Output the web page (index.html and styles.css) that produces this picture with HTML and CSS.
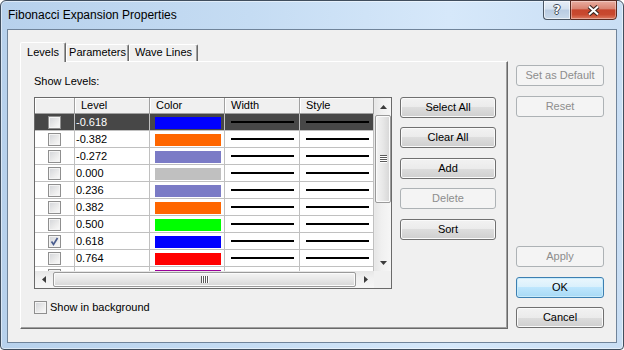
FILE: index.html
```html
<!DOCTYPE html>
<html>
<head>
<meta charset="utf-8">
<title>Fibonacci Expansion Properties</title>
<link rel="stylesheet" href="styles.css">
</head>
<body>
<div class="window">
  <div class="titlebar">
    <div class="title">Fibonacci Expansion Properties</div>
    <div class="caption">
      <div class="cap-btn help"><span class="help-glyph">?</span></div>
      <div class="cap-btn close">
        <svg width="13" height="11" viewBox="0 0 13 11"><path d="M2 1.5 L11 9.5 M11 1.5 L2 9.5" stroke="#3a2622" stroke-width="4.2" fill="none"/><path d="M2 1.5 L11 9.5 M11 1.5 L2 9.5" stroke="#ffffff" stroke-width="2" fill="none"/></svg>
      </div>
    </div>
  </div>
  <div class="client">
    <div class="tabs-area">
      <div class="tabstrip">
        <div class="tab tab-levels active">Levels</div>
        <div class="tab tab-params">Parameters</div>
        <div class="tab tab-wave">Wave Lines</div>
      </div>
      <div class="panel">
        <div class="show-label">Show Levels:</div>
        <div class="panel-body">
          <div class="grid">
            <div class="grid-top">
              <div class="table">
                <div class="row head">
                  <div class="cell c0"></div>
                  <div class="cell c1">Level</div>
                  <div class="cell c2">Color</div>
                  <div class="cell c3">Width</div>
                  <div class="cell c4">Style</div>
                </div>
                <div class="row sel">
                  <div class="cell c0"><span class="cb"></span></div>
                  <div class="cell c1">-0.618</div>
                  <div class="cell c2"><span class="swatch" style="background:#0000ff"></span></div>
                  <div class="cell c3"><span class="line"></span></div>
                  <div class="cell c4"><span class="line"></span></div>
                </div>
                <div class="row">
                  <div class="cell c0"><span class="cb"></span></div>
                  <div class="cell c1">-0.382</div>
                  <div class="cell c2"><span class="swatch" style="background:#ff6600"></span></div>
                  <div class="cell c3"><span class="line"></span></div>
                  <div class="cell c4"><span class="line"></span></div>
                </div>
                <div class="row">
                  <div class="cell c0"><span class="cb"></span></div>
                  <div class="cell c1">-0.272</div>
                  <div class="cell c2"><span class="swatch" style="background:#7b7bc6"></span></div>
                  <div class="cell c3"><span class="line"></span></div>
                  <div class="cell c4"><span class="line"></span></div>
                </div>
                <div class="row">
                  <div class="cell c0"><span class="cb"></span></div>
                  <div class="cell c1">0.000</div>
                  <div class="cell c2"><span class="swatch" style="background:#c0c0c0"></span></div>
                  <div class="cell c3"><span class="line"></span></div>
                  <div class="cell c4"><span class="line"></span></div>
                </div>
                <div class="row">
                  <div class="cell c0"><span class="cb"></span></div>
                  <div class="cell c1">0.236</div>
                  <div class="cell c2"><span class="swatch" style="background:#7b7bc6"></span></div>
                  <div class="cell c3"><span class="line"></span></div>
                  <div class="cell c4"><span class="line"></span></div>
                </div>
                <div class="row">
                  <div class="cell c0"><span class="cb"></span></div>
                  <div class="cell c1">0.382</div>
                  <div class="cell c2"><span class="swatch" style="background:#ff6600"></span></div>
                  <div class="cell c3"><span class="line"></span></div>
                  <div class="cell c4"><span class="line"></span></div>
                </div>
                <div class="row">
                  <div class="cell c0"><span class="cb"></span></div>
                  <div class="cell c1">0.500</div>
                  <div class="cell c2"><span class="swatch" style="background:#00ff00"></span></div>
                  <div class="cell c3"><span class="line"></span></div>
                  <div class="cell c4"><span class="line"></span></div>
                </div>
                <div class="row">
                  <div class="cell c0"><span class="cb checked"><svg width="11" height="11" viewBox="0 0 11 11"><path d="M2.5 5.5 L4.5 8.5 L8.5 2" stroke="#4a5d8f" stroke-width="1.7" fill="none"/></svg></span></div>
                  <div class="cell c1">0.618</div>
                  <div class="cell c2"><span class="swatch" style="background:#0000ff"></span></div>
                  <div class="cell c3"><span class="line"></span></div>
                  <div class="cell c4"><span class="line"></span></div>
                </div>
                <div class="row">
                  <div class="cell c0"><span class="cb"></span></div>
                  <div class="cell c1">0.764</div>
                  <div class="cell c2"><span class="swatch" style="background:#ff0000"></span></div>
                  <div class="cell c3"><span class="line"></span></div>
                  <div class="cell c4"><span class="line"></span></div>
                </div>
                <div class="row">
                  <div class="cell c0"><span class="cb"></span></div>
                  <div class="cell c1">1.000</div>
                  <div class="cell c2"><span class="swatch" style="background:#990099"></span></div>
                  <div class="cell c3"><span class="line"></span></div>
                  <div class="cell c4"><span class="line"></span></div>
                </div>
              </div>
              <div class="vscroll">
                <div class="sb-arrow"><svg width="7" height="4" viewBox="0 0 7 4"><polygon points="0,4 3.5,0 7,4" fill="#3c3c3c"/></svg></div>
                <div class="vtrack">
                  <div class="vthumb">
                    <svg width="7" height="8" viewBox="0 0 7 8"><rect x="0" y="0" width="7" height="1" fill="#5a5a5a"/><rect x="0" y="1" width="7" height="1" fill="#fff"/><rect x="0" y="2" width="7" height="1" fill="#5a5a5a"/><rect x="0" y="3" width="7" height="1" fill="#fff"/><rect x="0" y="4" width="7" height="1" fill="#5a5a5a"/><rect x="0" y="5" width="7" height="1" fill="#fff"/><rect x="0" y="6" width="7" height="1" fill="#5a5a5a"/><rect x="0" y="7" width="7" height="1" fill="#fff"/></svg>
                  </div>
                </div>
                <div class="sb-arrow"><svg width="7" height="4" viewBox="0 0 7 4"><polygon points="0,0 7,0 3.5,4" fill="#3c3c3c"/></svg></div>
              </div>
            </div>
            <div class="grid-bottom">
              <div class="hscroll">
                <div class="sb-arrow h"><svg width="4" height="7" viewBox="0 0 4 7"><polygon points="4,0 4,7 0,3.5" fill="#3c3c3c"/></svg></div>
                <div class="htrack">
                  <div class="hthumb">
                    <svg width="8" height="7" viewBox="0 0 8 7"><rect x="0" y="0" width="1" height="7" fill="#5a5a5a"/><rect x="1" y="0" width="1" height="7" fill="#fff"/><rect x="2" y="0" width="1" height="7" fill="#5a5a5a"/><rect x="3" y="0" width="1" height="7" fill="#fff"/><rect x="4" y="0" width="1" height="7" fill="#5a5a5a"/><rect x="5" y="0" width="1" height="7" fill="#fff"/><rect x="6" y="0" width="1" height="7" fill="#5a5a5a"/><rect x="7" y="0" width="1" height="7" fill="#fff"/></svg>
                  </div>
                </div>
                <div class="sb-arrow h"><svg width="4" height="7" viewBox="0 0 4 7"><polygon points="0,0 4,3.5 0,7" fill="#3c3c3c"/></svg></div>
              </div>
              <div class="corner"></div>
            </div>
          </div>
          <div class="side-buttons">
            <div class="btn">Select All</div>
            <div class="btn">Clear All</div>
            <div class="btn">Add</div>
            <div class="btn disabled">Delete</div>
            <div class="btn">Sort</div>
          </div>
        </div>
        <div class="bg-check"><span class="cb"></span><span class="bg-label">Show in background</span></div>
      </div>
    </div>
    <div class="right-col">
      <div class="btn-group top-group">
        <div class="btn disabled">Set as Default</div>
        <div class="btn disabled">Reset</div>
      </div>
      <div class="btn-group bottom-group">
        <div class="btn disabled">Apply</div>
        <div class="btn default">OK</div>
        <div class="btn">Cancel</div>
      </div>
    </div>
  </div>
</div>
</body>
</html>
```

FILE: styles.css
```css
* { box-sizing: border-box; margin: 0; padding: 0; }
html, body { width: 624px; height: 350px; overflow: hidden; background: #ffffff; }
body { font-family: "Liberation Sans", Arial, sans-serif; font-size: 11px; color: #000; }

.window {
  width: 624px; height: 350px;
  border: 1px solid #404e5e;
  border-radius: 6px 6px 4px 4px;
  background: linear-gradient(90deg, #b7d1ec 0%, #c5dcf3 40%, #d6e8fa 72%, #c9def4 100%);
  box-shadow: inset 0 0 0 1px rgba(255,255,255,0.5);
  display: flex; flex-direction: column;
}

.titlebar { height: 28px; display: flex; align-items: flex-start; padding-left: 7px; }
.title { font-size: 12px; line-height: 29px; color: #000; }
.caption { margin-left: auto; margin-top: -1px; margin-right: 6px; display: flex; }
.cap-btn { height: 20px; display: flex; align-items: center; justify-content: center; border: 1px solid #4a5664; }
.help {
  width: 27px; border-right: none; border-radius: 0 0 0 4px;
  background: linear-gradient(180deg, #e6eef8 0%, #d4e1ef 45%, #b9cce2 50%, #c9d9ea 100%);
  box-shadow: inset 0 0 0 1px rgba(255,255,255,0.6);
}
.help-glyph {
  font-family: "DejaVu Sans", sans-serif; font-weight: bold; font-size: 12px; line-height: 12px; color: #fff;
  text-shadow: 1px 0 0 #3f4a58, -1px 0 0 #3f4a58, 0 1px 0 #3f4a58, 0 -1px 0 #3f4a58;
}
.close {
  width: 47px; border-color: #5a2a20; border-radius: 0 0 4px 0;
  background: linear-gradient(180deg, #e9ada0 0%, #da8573 42%, #c6452c 50%, #c8492f 75%, #dd7b62 100%);
  box-shadow: inset 0 0 0 1px rgba(255,255,255,0.35);
}

.client {
  flex: 1; margin: 0 6px 6px 6px;
  border: 1px solid #70849a;
  background: #f0f0f0;
  display: flex; gap: 8px;
  padding: 12px 12px 13px 12px;
}

.tabs-area { width: 488px; display: flex; flex-direction: column; }
.tabstrip { height: 19px; display: flex; align-items: flex-end; }
.tab {
  height: 17px; line-height: 15px; text-align: center;
  background: #f0f0f0;
  border: 1px solid; border-bottom: none;
  border-color: #ffffff #696969 transparent #ffffff;
  box-shadow: inset -1px 0 0 #a0a0a0;
  border-radius: 2px 2px 0 0;
}
.tab-levels { width: 46px; }
.tab-params { width: 63px; }
.tab-wave { width: 69px; }
.tab.active {
  height: 20px; line-height: 18px; margin-bottom: -1px;
  position: relative; z-index: 2;
}

.panel {
  flex: 1;
  border: 1px solid; border-color: #ffffff #696969 #696969 #ffffff;
  box-shadow: inset -1px -1px 0 #a0a0a0;
  background: #f0f0f0;
  padding: 12px 11px 0 13px;
}
.show-label { height: 14px; line-height: 14px; margin-bottom: 9px; }
.panel-body { display: flex; gap: 8px; align-items: flex-start; }

.grid {
  width: 358px; height: 192px;
  border: 1px solid #6a6a6a;
  background: #fff;
  display: flex; flex-direction: column;
}
.grid-top { height: 173px; display: flex; }
.table { width: 339px; overflow: hidden; background: #fff; }
.row { display: flex; height: 17px; border-bottom: 1px solid #c0c0c0; }
.cell { height: 100%; border-right: 1px solid #c0c0c0; line-height: 16px; white-space: nowrap; overflow: hidden; }
.c0 { width: 40px; display: flex; justify-content: center; padding-top: 2px; }
.c1 { width: 75px; padding-left: 1px; }
.c2 { width: 75px; padding: 3px 0 0 5px; }
.c3 { width: 75px; padding: 7px 0 0 6px; }
.c4 { width: 74px; padding: 7px 0 0 6px; }

.row.head { height: 16px; border-bottom: none; }
.row.head .cell {
  background: #f0f0f0;
  border-right: 1px solid #a0a0a0; border-bottom: 1px solid #a0a0a0;
  box-shadow: inset 1px 1px 0 #ffffff;
  padding: 0 0 0 6px; line-height: 15px;
}
.row.sel { background: #474747; color: #fff; }

.cb {
  display: block; width: 13px; height: 13px;
  border: 1px solid #8f8f8f;
  background: linear-gradient(135deg, #d2d4d8 0%, #ececec 60%, #fbfbfb 100%);
  box-shadow: inset 0 0 0 1px #f4f4f4;
}
.cb.checked { display: flex; align-items: center; justify-content: center; }
.swatch { display: block; width: 66px; height: 12px; }
.line { display: block; width: 63px; height: 2px; background: #000; }

.vscroll {
  width: 17px; display: flex; flex-direction: column;
  background: linear-gradient(90deg, #e6e6e6 0%, #f0f0f0 40%, #f6f6f6 100%);
  border-left: 1px solid #e9e9e9;
}
.sb-arrow { height: 17px; flex: none; display: flex; align-items: center; justify-content: center; }
.sb-arrow.h { width: 17px; height: auto; }
.vtrack { flex: 1; }
.vthumb {
  height: 88px; border: 1px solid #9a9a9a; border-radius: 2px;
  background: linear-gradient(90deg, #f4f4f4 0%, #e7e7e7 50%, #d6d6d6 100%);
  box-shadow: inset 0 0 0 1px #fbfbfb;
  display: flex; align-items: center; justify-content: center;
}

.grid-bottom { height: 17px; display: flex; }
.hscroll {
  width: 339px; display: flex;
  background: linear-gradient(180deg, #e6e6e6 0%, #f0f0f0 40%, #f6f6f6 100%);
}
.htrack { flex: 1; padding: 1px; display: flex; }
.hthumb {
  flex: 1; border: 1px solid #9a9a9a; border-radius: 2px;
  background: linear-gradient(180deg, #f4f4f4 0%, #e7e7e7 50%, #d6d6d6 100%);
  box-shadow: inset 0 0 0 1px #fbfbfb;
  display: flex; align-items: center; justify-content: center;
}
.corner { width: 17px; background: #f0f0f0; }

.side-buttons { display: flex; flex-direction: column; }
.side-buttons .btn + .btn { margin-top: 9px; }
.side-buttons .btn:nth-child(3), .side-buttons .btn:nth-child(5) { margin-top: 10px; }
.btn {
  width: 96px; height: 21px; line-height: 19px; text-align: center;
  border: 1px solid #707070; border-radius: 3px;
  background: linear-gradient(180deg, #f2f2f2 0%, #ebebeb 50%, #dddddd 50%, #cfcfcf 100%);
  box-shadow: inset 0 0 0 1px #fafafa;
  color: #000;
}
.btn.disabled {
  border-color: #adb2b5; background: #f4f4f4; color: #8d8d8d; box-shadow: none;
}
.btn.default {
  border-color: #3c7fb1;
  background: linear-gradient(180deg, #eaf6fd 0%, #d9f0fc 50%, #bee6fd 50%, #a7d9f5 100%);
  box-shadow: inset 0 0 0 1px #c8ebfb;
}

.bg-check { display: flex; align-items: center; margin-top: 12px; height: 13px; }
.bg-label { margin-left: 3px; line-height: 13px; }

.right-col {
  width: 88px; display: flex; flex-direction: column; justify-content: space-between;
  padding: 23px 0 1px 0;
}
.right-col .btn { width: 88px; }
.btn-group { display: flex; flex-direction: column; }
.btn-group .btn + .btn { margin-top: 10px; }
.bottom-group .btn:last-child { margin-top: 9px; }
```
